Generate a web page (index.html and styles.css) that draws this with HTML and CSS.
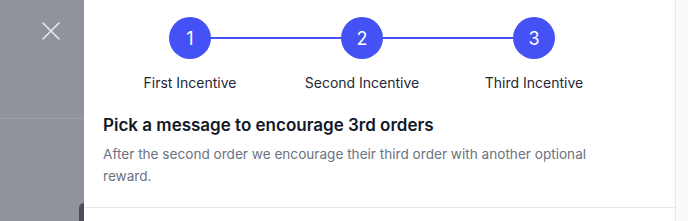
FILE: index.html
```html
<!DOCTYPE html>
<html>
<head>
<meta charset="utf-8">
<link rel="stylesheet" href="styles.css">
</head>
<body>
<div class="app">
  <div class="overlay">
    <div class="overlay-top">
      <button class="close" aria-label="Close">
        <svg width="18" height="18" viewBox="0 0 18 18"><path d="M1 1L17 17M17 1L1 17" stroke="#e8eaee" stroke-width="1.6" fill="none" stroke-linecap="round"/></svg>
      </button>
    </div>
    <div class="overlay-bottom">
      <span class="peek"></span>
    </div>
  </div>
  <div class="panel">
    <div class="steps">
      <div class="step"><span class="dot">1</span><span class="label">First Incentive</span></div>
      <div class="step"><span class="dot">2</span><span class="label">Second Incentive</span></div>
      <div class="step last"><span class="dot">3</span><span class="label">Third Incentive</span></div>
    </div>
    <div class="section">
      <h2 class="title">Pick a message to encourage 3rd orders</h2>
      <p class="desc">After the second order we encourage their third order with another optional reward.</p>
    </div>
    <div class="rest"></div>
  </div>
  <div class="side"></div>
</div>
</body>
</html>
```
FILE: styles.css
```css
* { box-sizing: border-box; }
html, body { margin: 0; padding: 0; }
body {
  width: 688px;
  height: 221px;
  overflow: hidden;
  font-family: Inter, "Noto Sans", sans-serif;
  background: #ffffff;
}
.app {
  display: flex;
  height: 221px;
}
.overlay {
  width: 84px;
  flex: none;
  background: #8e939c;
  display: flex;
  flex-direction: column;
}
.overlay-top {
  height: 119px;
  border-bottom: 1px solid #9a9ea7;
  padding: 22px 0 0 42px;
}
.close {
  border: 0;
  background: transparent;
  padding: 0;
  width: 18px;
  height: 18px;
  display: block;
}
.close svg { display: block; }
.overlay-bottom {
  flex: 1;
  display: flex;
  justify-content: flex-end;
  align-items: flex-end;
}
.peek {
  width: 5px;
  height: 18px;
  background: #4b4f57;
  border-radius: 5px 0 0 0;
}
.panel {
  flex: 1;
  display: flex;
  flex-direction: column;
  background: #ffffff;
}
.steps {
  display: grid;
  grid-template-columns: repeat(3, 172px);
  padding: 17px 0 0 20px;
}
.step {
  position: relative;
  display: flex;
  flex-direction: column;
  align-items: center;
}
.step::after {
  content: "";
  position: absolute;
  top: 20px;
  left: 50%;
  width: 172px;
  height: 2px;
  background: #4451f4;
  z-index: 0;
}
.step.last::after { display: none; }
.dot {
  position: relative;
  z-index: 1;
  width: 42px;
  height: 42px;
  border-radius: 50%;
  background: #4451f4;
  color: #ffffff;
  font-size: 18px;
  display: flex;
  align-items: center;
  justify-content: center;
}
.label {
  margin-top: 15px;
  font-size: 14px;
  line-height: 18px;
  color: #1f2937;
  white-space: nowrap;
}
.section {
  padding: 21px 19px 20px 19px;
  border-bottom: 1px solid #e5e7eb;
}
.title {
  margin: 0;
  font-size: 17px;
  line-height: 24px;
  font-weight: 600;
  color: #111827;
}
.desc {
  margin: 6px 0 0 0;
  max-width: 520px;
  font-size: 13.6px;
  line-height: 22px;
  color: #6b7280;
}
.rest { flex: 1; }
.side {
  width: 13px;
  flex: none;
  background: #fafafa;
  border-left: 1px solid #e5e7eb;
}
```
